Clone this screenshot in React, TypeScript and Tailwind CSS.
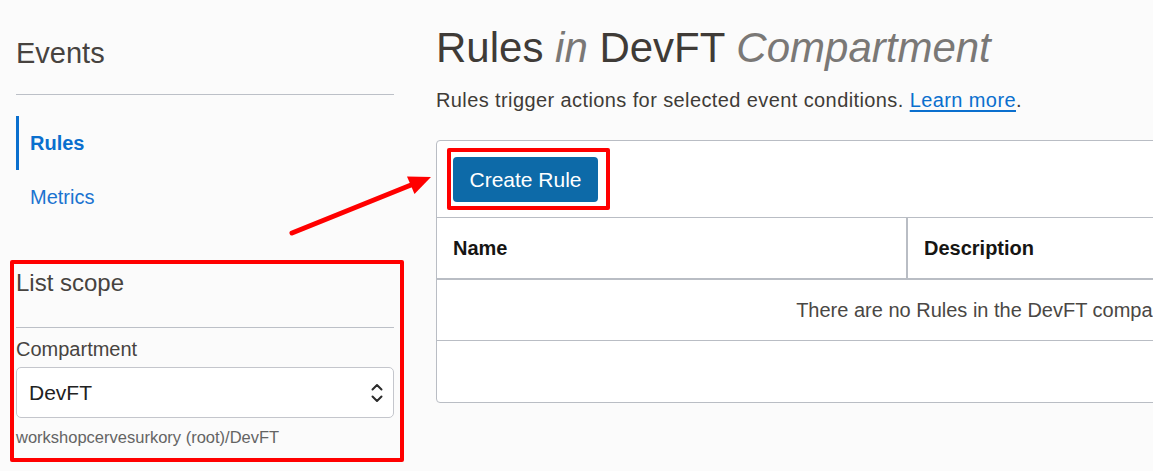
const ChevronUpDown = () => (
  <svg width="14" height="22" viewBox="0 0 14 22" fill="none" stroke="#2b2b2b" strokeWidth="2" strokeLinecap="round" strokeLinejoin="round">
    <path d="M2.5 7.5 L7 3 L11.5 7.5" />
    <path d="M2.5 14.5 L7 19 L11.5 14.5" />
  </svg>
);

const Sidebar = () => {
  return (
    <aside className="w-[378px] shrink-0 relative">
      <h1 className="mt-[35px] text-[29px] leading-[36px] text-[#47433f]">Events</h1>
      <div className="mt-[23px] border-t border-[#bcc0c7]" />
      <nav className="mt-[21px] flex flex-col">
        <a className="h-[54px] flex items-center pl-[11px] border-l-[3px] border-[#0a6fce] text-[20px] font-bold text-[#0a6fce]">
          Rules
        </a>
        <a className="h-[54px] flex items-center pl-[14px] text-[20px] text-[#1a73d0]">Metrics</a>
      </nav>

      <section className="relative mt-[44px]">
        <h2 className="text-[24px] leading-[30px] text-[#47433f]">List scope</h2>
        <div className="mt-[29px] border-t border-[#bcc0c7]" />
        <label className="block mt-[9px] text-[20px] leading-[24px] text-[#47433f]">Compartment</label>
        <div className="mt-[6px] h-[51px] flex items-center justify-between rounded-[5px] border border-[#c4c6cc] bg-white pl-[12px] pr-[9px]">
          <span className="text-[21px] text-[#222]">DevFT</span>
          <ChevronUpDown />
        </div>
        <p className="mt-[9px] text-[16.5px] leading-[20px] text-[#646464]">workshopcervesurkory (root)/DevFT</p>
        {/* annotation box */}
        <div className="pointer-events-none absolute left-[-6px] top-[-8px] w-[394px] h-[202px] border-4 border-[#ff0000] rounded-[2px]" />
      </section>
    </aside>
  );
};

const Main = () => {
  return (
    <main className="shrink-0">
      <h1 className="mt-[24px] text-[42px] leading-[48px] text-[#3f3b37]">
        Rules <em className="text-[#7a7876]">in</em> DevFT <em className="text-[#7a7876]">Compartment</em>
      </h1>
      <p className="mt-[16px] text-[20px] leading-[24px] tracking-[0.4px] text-[#3f3b37]">
        Rules trigger actions for selected event conditions.{" "}
        <a className="text-[#0a6fce] underline underline-offset-[3px]">Learn more</a>.
      </p>

      <div className="mt-[28px] w-[1139px] h-[263px] rounded-[4px] border border-[#b9bdc4] bg-white">
        <div className="h-[76px] pt-[7px] pl-[10px]">
          <div className="inline-block border-4 border-[#ff0000] rounded-[2px] pl-[2px] pr-[8px] pt-[5px] pb-[4px]">
            <button className="w-[145px] h-[45px] rounded-[4px] bg-[#0d6aa8] text-white text-[21px]">Create Rule</button>
          </div>
        </div>
        <div className="flex h-[63px] border-t border-b-2 border-[#b9bdc4]">
          <div className="w-[471px] flex items-center pl-[16px] border-r-2 border-[#b9bdc4] text-[20px] font-bold text-[#161513]">
            Name
          </div>
          <div className="flex items-center pl-[16px] text-[20px] font-bold text-[#161513]">Description</div>
        </div>
        <div className="h-[61px] flex items-center justify-center border-b border-[#b9bdc4] text-[20px] text-[#4a4744]">
          There are no Rules in the DevFT compartment.
        </div>
      </div>
    </main>
  );
};

export default function App() {
  return (
    <div className="relative w-[1153px] h-[471px] overflow-hidden bg-[#fbfbfb] font-['Liberation_Sans',Arial,sans-serif]">
      <div className="flex gap-[42px] pl-[16px]">
        <Sidebar />
        <Main />
      </div>
      {/* annotation arrow */}
      <svg className="pointer-events-none absolute left-0 top-0" width="1153" height="471">
        <line x1="292" y1="233" x2="411" y2="185" stroke="#ff0000" strokeWidth="5" strokeLinecap="round" />
        <polygon points="431,177 407,176.5 414.5,194" fill="#ff0000" />
      </svg>
    </div>
  );
}
